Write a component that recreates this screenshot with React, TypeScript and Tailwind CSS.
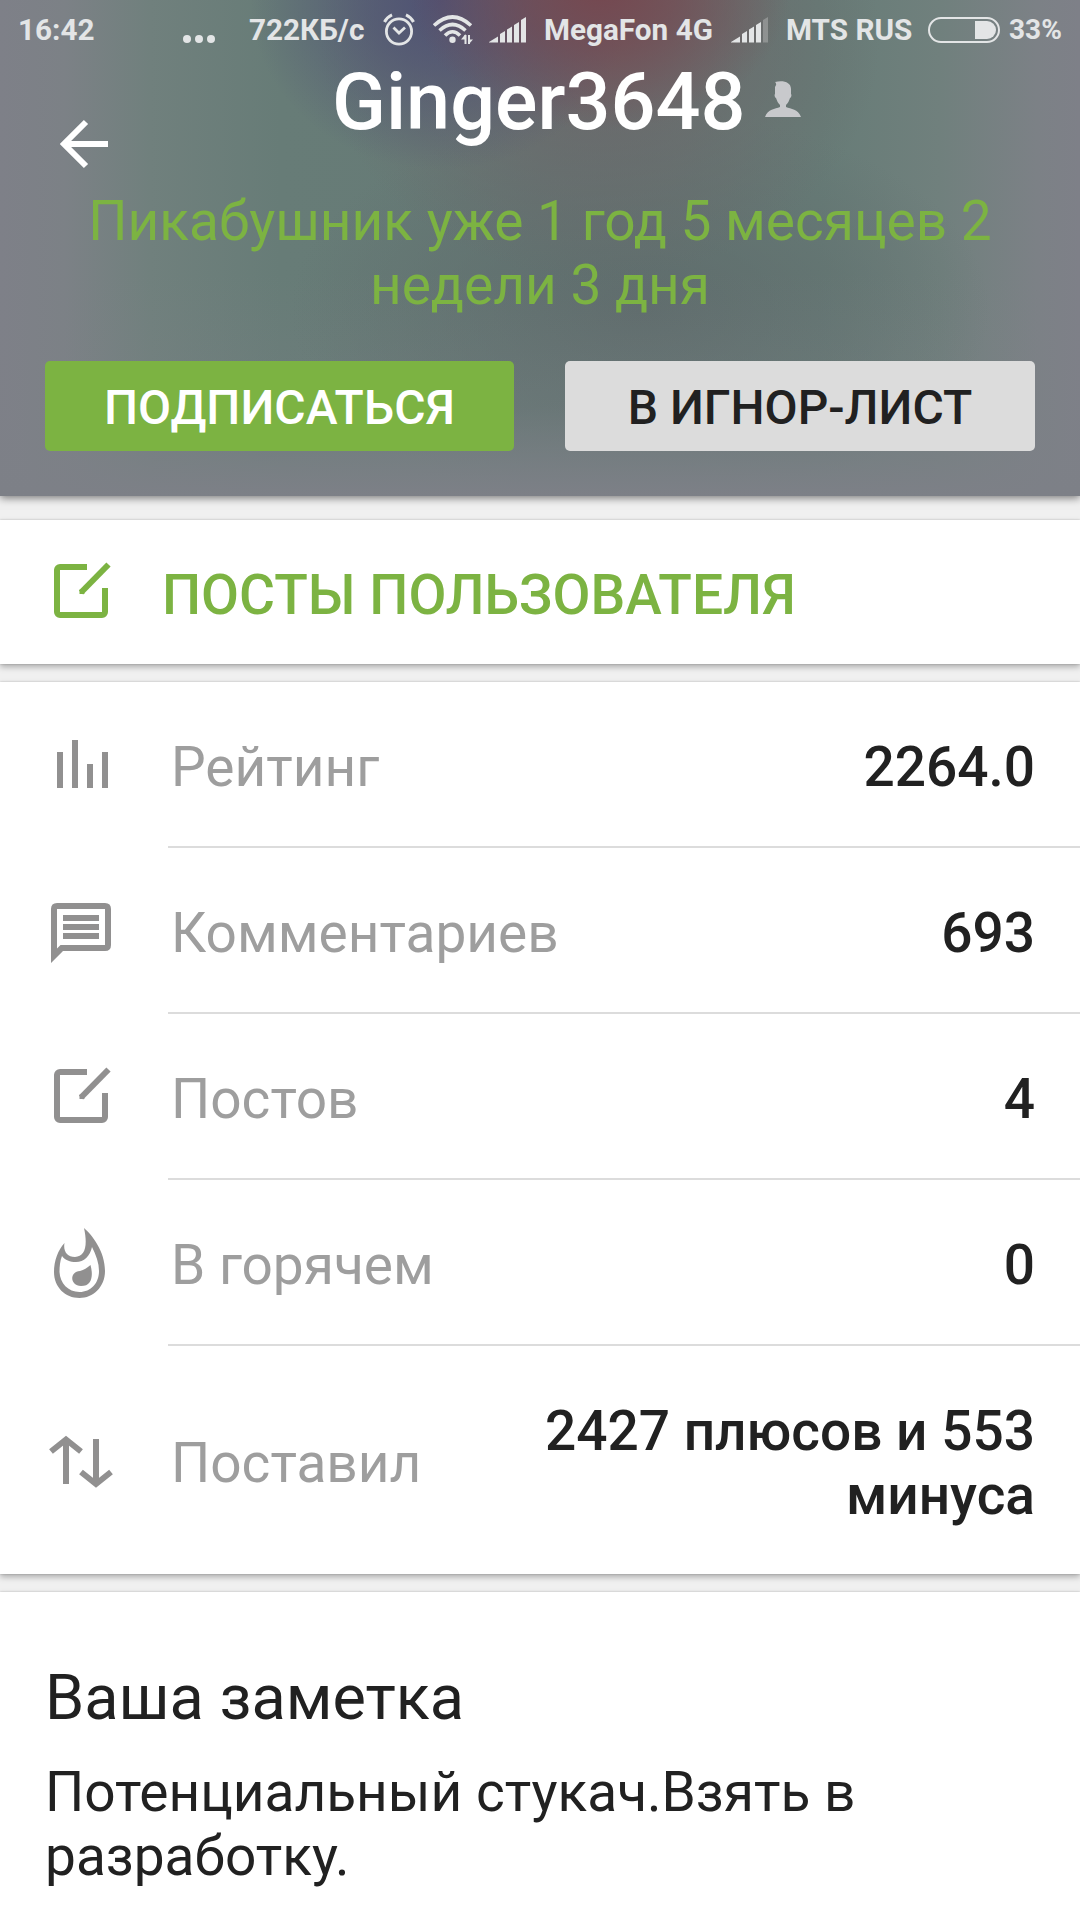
import React from "react";

const cardShadow = "shadow-[0_3px_6px_rgba(0,0,0,0.28),0_0_2px_rgba(0,0,0,0.2)]";

function EditIcon() {
  return (
    <svg className="mb-[2px] shrink-0" width="72" height="72" viewBox="0 0 72 72" fill="none" stroke="currentColor" strokeWidth="6">
      <path d="M42 12H15a3 3 0 0 0-3 3v42a3 3 0 0 0 3 3h42a3 3 0 0 0 3-3V33" />
      <path d="M36 37.500L63.500 9.500" />
      <path d="M34.500 34.500v4.500h5l-1-3z" fill="currentColor" stroke="none" />
    </svg>
  );
}

function BarsIcon() {
  return (
    <svg className="mb-[2px] shrink-0" width="72" height="72" viewBox="0 0 72 72" fill="currentColor">
      <path d="M12 24h6v36h-6zM27 12h6v48h-6zM42 36h6v24h-6zM57 24h6v36h-6z" />
    </svg>
  );
}

function CommentIcon() {
  return (
    <svg className="mt-1 shrink-0" width="72" height="72" viewBox="0 0 72 72" fill="currentColor">
      <path fillRule="evenodd" d="M6 66V12q0-6 6-6h48q6 0 6 6v36q0 6-6 6H18zM12 51.500L15.500 48H60V12H12z" />
      <path d="M18 18h36v6H18zM18 27h36v6H18zM18 36h36v6H18z" />
    </svg>
  );
}

function FlameIcon() {
  return (
    <svg className="mt-[2px] shrink-0" width="72" height="72" viewBox="0 0 72 72" fill="currentColor">
      <path
        fillRule="evenodd"
        d="M39 0C47 7 60 23 60 43C60 59 48 70 34.500 70C20 70 9 59 9 44C9 33 13 22 19.500 15C18 23 22 29 30 29C40 29 43 18 39 0zM47 19C45 28 39 34 31 34C25 34 20 32 17 28C15 33 14.500 38 14.500 44C15 55 23 64 34.500 64C46 64 54 55 54 43C54 35 51 27 47 19z"
      />
      <path d="M45.500 37C48 46 48 58 36 58C25 57.500 24 44 35 43C39 42 42 40 45.500 37z" />
    </svg>
  );
}

function ArrowsIcon() {
  return (
    <svg className="mt-1 shrink-0" width="72" height="72" viewBox="0 0 72 72" fill="none" stroke="currentColor" strokeWidth="6">
      <path d="M21 58V14M6 25.500L21 13.500L36 25.500M51 13V57M36 46L51 58L66 46" />
    </svg>
  );
}

function AlarmIcon() {
  return (
    <svg width="32" height="34" viewBox="0 0 32 34" fill="none" stroke="currentColor">
      <circle cx="16" cy="18.500" r="12.600" strokeWidth="2.800" />
      <path d="M10.500 14.500L16 20L22 14.500" strokeWidth="2.800" />
      <path d="M1.500 9Q4 4 9 1.800M23 1.800Q28 4 30.500 9" strokeWidth="3" />
    </svg>
  );
}

function WifiIcon() {
  return (
    <svg width="40" height="30" viewBox="0 0 40 30" fill="none" stroke="currentColor">
      <path d="M1 10.500Q19.500-6.500 38 10.500" strokeWidth="3.600" />
      <path d="M6.500 15.500Q19.500 3.500 32.500 15.500" strokeWidth="3.600" />
      <path d="M12 20.500Q19.500 13 27 20.500" strokeWidth="3.600" />
      <circle cx="19.500" cy="24.800" r="3.200" fill="currentColor" stroke="none" />
      <path d="M32.500 29V20M36 20v9" strokeWidth="2" />
      <path d="M28 24.500l4.500-5.500v5.500zM36 24.500h4L36 29z" fill="currentColor" stroke="none" />
    </svg>
  );
}

function SignalIcon({ weak = false }: { weak?: boolean }) {
  return (
    <svg width="37" height="26" viewBox="0 0 37 26" fill="currentColor">
      <path d="M0 25L9 19.500V25.500H0zM11 17L16 14V25.500H11zM18 12.500L23 9.500V25.500H18zM25 8L30 5V25.500H25z" />
      <path d="M32 3L37 0V25.500H32z" opacity={weak ? 0.3 : 1} />
    </svg>
  );
}

function BatteryIcon() {
  return (
    <svg width="72" height="26" viewBox="0 0 72 26">
      <rect x="1" y="1" width="70" height="24" rx="12" fill="none" stroke="currentColor" strokeWidth="2" />
      <path d="M47 4h12a9 9 0 0 1 0 18H47z" fill="currentColor" />
    </svg>
  );
}

function StatusBar() {
  return (
    <div className="flex h-[60px] items-center whitespace-nowrap pl-[18px] text-[29.7px] font-bold leading-none text-[#e3e5e6]">
      <span className="w-[165px]">16:42</span>
      <span className="flex w-[66px] gap-1 pt-[18px]">
        <i className="size-2 rounded-full bg-current" />
        <i className="size-2 rounded-full bg-current" />
        <i className="size-2 rounded-full bg-current" />
      </span>
      <span className="w-[134px]">722КБ/с</span>
      <span className="w-[50px]"><AlarmIcon /></span>
      <span className="w-[56px]"><WifiIcon /></span>
      <span className="w-[55px]"><SignalIcon /></span>
      <span className="w-[187px]">MegaFon 4G</span>
      <span className="w-[55px]"><SignalIcon weak /></span>
      <span className="w-[142px]">MTS RUS</span>
      <span className="w-[81px]"><BatteryIcon /></span>
      <span className="text-[28px]">33%</span>
    </div>
  );
}

function Header() {
  return (
    <header className="relative z-10 h-[496px] bg-[#7e8088] shadow-[0_2px_8px_rgba(0,0,0,0.5)]">
      <div className="absolute inset-0 bg-[radial-gradient(190px_140px_at_600px_-10px,#754850_0%,#754850aa_40%,#75485000_100%),radial-gradient(190px_170px_at_440px_0px,#4f5274_0%,#4f5274aa_40%,#4f527400_100%),radial-gradient(280px_240px_at_600px_40px,#6b6468_0%,#6b646800_100%),linear-gradient(to_bottom,#7d808700_55%,#7d808740_82%,#7d8087_100%),radial-gradient(350px_200px_at_640px_310px,#5f6c6c_0%,#5f6c6c00_100%),linear-gradient(to_right,#7e8088_0%,#7c8186_6%,#70807d_14%,#677c77_26%,#667a76_50%,#677c77_76%,#70807d_87%,#7c8186_96%,#7e8088_100%)]" />
      <div className="relative">
        <StatusBar />
        <div className="flex h-[116px]">
          <svg className="ml-[60px] mt-[59px] h-[50px] w-[49px]" viewBox="0 0 49 50" fill="none" stroke="#fff" strokeWidth="6">
            <path d="M48 25H5M26 3L4 25L26 47" />
          </svg>
          <h1 className="ml-[223px] w-[412px] whitespace-nowrap text-[79.2px] font-medium leading-[84px] text-white">Ginger3648</h1>
          <svg className="ml-[21px] mt-[21px] h-[36px] w-[36px]" viewBox="0 0 36 36" fill="#c8c9cc">
            <path d="M10 1C18-1 26 1 26 8v5c1 1 0 4-1 4c-1 3-2 5-4 7v2c5 2 12 2 15 10H0c3-8 10-8 15-10v-2c-2-2-3-4-4-7c-1 0-2-3-1-4V6c1-2 2-3 0-5z" />
          </svg>
        </div>
        <p className="mt-[13px] px-[60px] text-center text-[55px] leading-[64px] text-[#7cb342]">
          Пикабушник уже 1 год 5 месяцев 2 недели 3 дня
        </p>
        <div className="mt-[44px] grid grid-cols-[469px_470px] gap-[51px] px-[45px] text-[48px] font-medium">
          <button className="h-[90px] rounded-[5px] bg-[#7cb342] pt-[3px] text-white">ПОДПИСАТЬСЯ</button>
          <button className="h-[90px] rounded-[5px] bg-[#dcdcdc] pt-[3px] text-[#212121]">В ИГНОР-ЛИСТ</button>
        </div>
      </div>
    </header>
  );
}

const rows = [
  { icon: <BarsIcon />, label: "Рейтинг", value: "2264.0" },
  { icon: <CommentIcon />, label: "Комментариев", value: "693" },
  { icon: <EditIcon />, label: "Постов", value: "4" },
  { icon: <FlameIcon />, label: "В горячем", value: "0" },
  { icon: <ArrowsIcon />, label: "Поставил", value: "2427 плюсов и 553 минуса" },
];

export default function App() {
  return (
    <div className="h-[1920px] w-[1080px] overflow-hidden bg-[#f0f0f0] font-[Roboto,sans-serif]">
      <Header />
      <section className={`mt-6 flex h-[144px] items-center bg-white pl-[45px] text-[#7cb342] ${cardShadow}`}>
        <EditIcon />
        <h2 className="ml-[45px] pt-[7px] text-[55.1px] font-medium">ПОСТЫ ПОЛЬЗОВАТЕЛЯ</h2>
      </section>
      <section className={`mt-[18px] bg-white ${cardShadow}`}>
        {rows.map((row, i) => (
          <div key={row.label} className={`flex pl-[45px] text-[#919090] ${i === 4 ? "h-[228px]" : "h-[166px]"}`}>
            <div className="flex w-[123px] shrink-0 items-center">{row.icon}</div>
            <div className={`flex min-w-0 flex-1 items-center pr-[45px] pt-[5px] text-[55px] leading-[64px] ${i === 4 ? "" : "border-b-2 border-[#dcdcdc]"}`}>
              <span className="ml-[3px] shrink-0 text-[#9e9e9e]">{row.label}</span>
              <span className="ml-auto max-w-[530px] text-right font-medium text-[#212121]">{row.value}</span>
            </div>
          </div>
        ))}
      </section>
      <section className={`mt-[18px] h-[400px] bg-white px-[45px] pt-[66px] text-[#212121] ${cardShadow}`}>
        <h3 className="text-[63px] leading-[80px]">Ваша заметка</h3>
        <p className="mt-[22px] text-[55px] leading-[64px]">Потенциальный стукач.Взять в разработку.</p>
      </section>
    </div>
  );
}
